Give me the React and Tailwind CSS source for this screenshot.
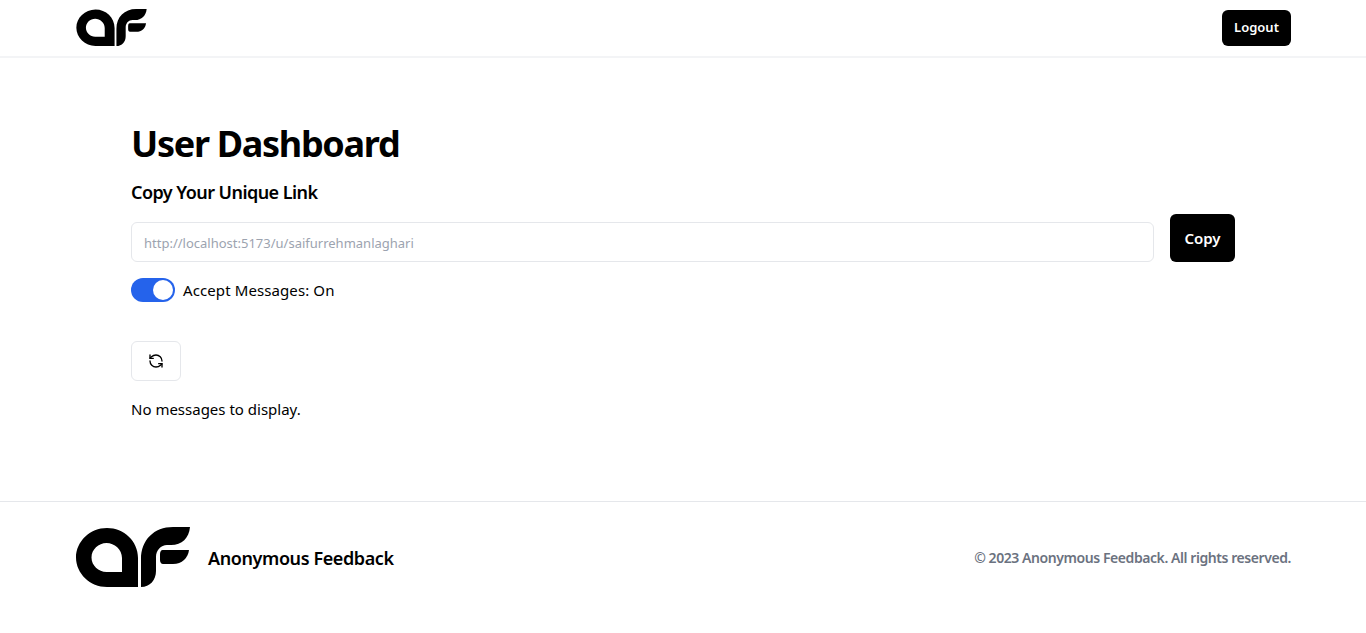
import React from "react";
import { RefreshCcw } from "lucide-react";

// "af" logo mark, drawn on the footer's pixel grid
function Logo({ className }) {
  return (
    <svg viewBox="0 0 114 60" className={className} fill="#000">
      <path
        fillRule="evenodd"
        d="M31 1C48 1 62 14 62 31V60H31C14 60 0 46.500 0 30.500S14 1 31 1ZM30.500 16C22.500 16 15.500 22.500 15.500 30.500S22.500 45 30.500 45H46V31C46 22.500 38.500 16 30.500 16Z"
      />
      <path d="M65 60V32C65 13 78 0 97 0H114C113 11 106 18 95 18H91C85 18 80 23 80 30V44C80 53 74 60 65 60Z" />
      <path d="M86.500 23H113C112 31 106 37 97 37H87C85 37 84 35 84 33V27C84 25 85 23 86.500 23Z" />
    </svg>
  );
}

export default function App() {
  return (
    <div className="min-h-[633px] flex flex-col bg-white text-black font-['Noto_Sans',sans-serif]">
      <nav className="h-[58px] border-b-2 border-[#f3f4f6]">
        <div className="max-w-7xl mx-auto px-8 h-full flex items-start justify-between pt-[9px]">
          <Logo className="ml-px w-[71px] h-[37px]" />
          <button className="mt-px h-9 w-[69px] rounded-md bg-black text-white text-[13px] font-semibold">
            Logout
          </button>
        </div>
      </nav>

      <main className="h-[444px] border-b border-[#e5e7eb]">
        <div className="max-w-6xl mx-auto px-6 pt-[66px]">
          <h1 className="text-4xl leading-10 font-bold tracking-[-1.3px]">User Dashboard</h1>
          <h2 className="mt-[14px] text-lg leading-7 font-semibold tracking-[-0.55px]">Copy Your Unique Link</h2>

          <div className="mt-2 flex items-end gap-4">
            <input
              readOnly
              value="http://localhost:5173/u/saifurrehmanlaghari"
              className="flex-1 h-10 px-3 pt-px rounded-md border border-[#e5e7eb] text-[13px] text-[#9ca3af] outline-none"
            />
            <button className="h-12 w-[65px] rounded-md bg-black text-white text-[15px] font-semibold">
              Copy
            </button>
          </div>

          <div className="mt-4 flex items-center gap-2">
            <span className="flex items-center justify-end w-11 h-6 rounded-full bg-[#2563eb] pr-0.5">
              <span className="w-5 h-5 rounded-full bg-white" />
            </span>
            <span className="text-[15px] tracking-[0.1px]">Accept Messages: On</span>
          </div>

          <button className="mt-[39px] flex items-center justify-center w-[50px] h-10 rounded-md border border-[#e5e7eb] bg-white">
            <RefreshCcw className="w-4 h-4" strokeWidth={2} />
          </button>

          <p className="mt-4 text-[15px] leading-6">No messages to display.</p>
        </div>
      </main>

      <footer className="max-w-7xl w-full mx-auto px-8 pt-[25px] flex items-start justify-between">
        <div className="flex items-center gap-[18px]">
          <Logo className="ml-px w-[114px] h-[60px]" />
          <span className="pt-0.5 text-lg font-semibold tracking-[-0.4px]">Anonymous Feedback</span>
        </div>
        <p className="mt-[21px] text-sm leading-5 font-semibold text-[#6b7280] tracking-[-0.43px]">
          © 2023 Anonymous Feedback. All rights reserved.
        </p>
      </footer>
    </div>
  );
}
